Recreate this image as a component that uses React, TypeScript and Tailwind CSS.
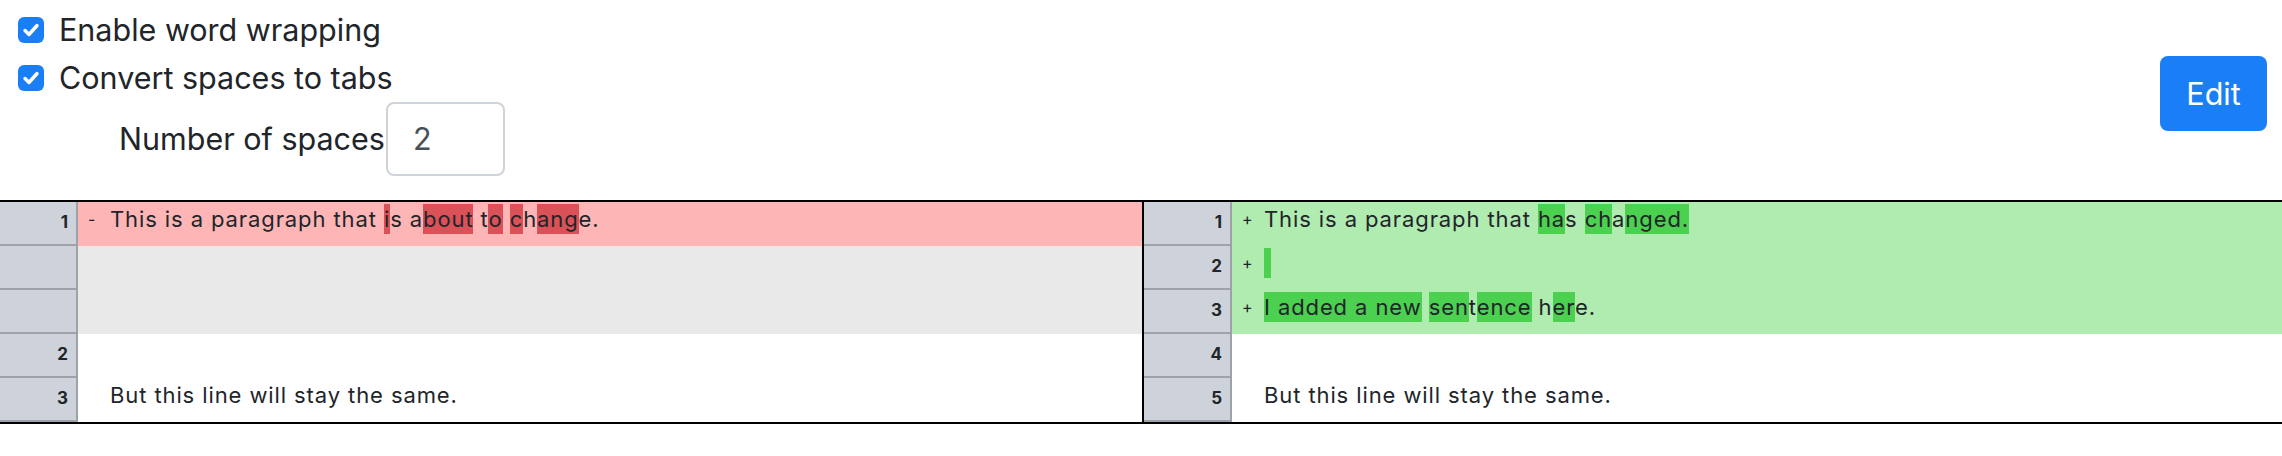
import React from 'react';

type Seg = [string, boolean];

interface Row {
    num?: number;
    kind: 'removed' | 'added' | 'empty' | 'same';
    segs: Seg[];
}

const LEFT_ROWS: Row[] = [
    {
        num: 1,
        kind: 'removed',
        segs: [
            ['This is a paragraph that ', false],
            ['i', true],
            ['s a', false],
            ['bout', true],
            [' t', false],
            ['o', true],
            [' ', false],
            ['c', true],
            ['h', false],
            ['ang', true],
            ['e.', false],
        ],
    },
    { kind: 'empty', segs: [] },
    { kind: 'empty', segs: [] },
    { num: 2, kind: 'same', segs: [] },
    { num: 3, kind: 'same', segs: [['But this line will stay the same.', false]] },
];

const RIGHT_ROWS: Row[] = [
    {
        num: 1,
        kind: 'added',
        segs: [
            ['This is a paragraph that ', false],
            ['ha', true],
            ['s ', false],
            ['ch', true],
            ['a', false],
            ['nged.', true],
        ],
    },
    { num: 2, kind: 'added', segs: [[' ', true]] },
    {
        num: 3,
        kind: 'added',
        segs: [
            ['I added a new', true],
            [' ', false],
            ['sen', true],
            ['t', false],
            ['ence', true],
            [' h', false],
            ['er', true],
            ['e.', false],
        ],
    },
    { num: 4, kind: 'same', segs: [] },
    { num: 5, kind: 'same', segs: [['But this line will stay the same.', false]] },
];

function Checkbox() {
    return (
        <span className="w-[26px] h-[26px] rounded-[6px] bg-[#1a7ff6] flex items-center justify-center shrink-0">
            <svg width="22" height="22" viewBox="0 0 22 22" fill="none">
                <path d="M5 11.5l4 4L17 6.5" stroke="white" strokeWidth="3.4" strokeLinecap="round" strokeLinejoin="round" />
            </svg>
        </span>
    );
}

function DiffPane({ rows, gutter, first }: { rows: Row[]; gutter: string; first?: boolean }) {
    return (
        <div className={`flex flex-col ${first ? 'w-[1142px]' : 'flex-1 border-l-2 border-black'}`}>
            {rows.map((row, i) => {
                const bg =
                    row.kind === 'removed'
                        ? 'bg-[#feb5b6]'
                        : row.kind === 'added'
                            ? 'bg-[#b0ebb0]'
                            : row.kind === 'empty'
                                ? 'bg-[#e9e9e9]'
                                : 'bg-white';
                const hl = row.kind === 'removed' ? 'bg-[#da5157]' : 'bg-[#4bd04f]';
                const marker = row.kind === 'removed' ? '-' : row.kind === 'added' ? '+' : '';
                return (
                    <div key={i} className="flex h-[44px]">
                        <div className={`${gutter} shrink-0 bg-[#ced2da] border-r-2 border-b-2 border-[#9da1a8] flex items-center justify-end pr-[8px] text-[17px] font-bold text-[#212529]`}>
                            {row.num}
                        </div>
                        <div className={`flex-1 ${bg} pl-[10px] pt-[2px]`}>
                            {row.kind !== 'empty' && (
                                <div className="flex leading-[30px] text-[22px] tracking-[0.9px] text-[#212529] whitespace-pre">
                                    <span className="w-[22px] text-[16px] tracking-normal shrink-0">{marker}</span>
                                    <span>
                                        {row.segs.map(([t, h], j) =>
                                            h ? (
                                                <span key={j} className={`${hl} py-[2px]`}>{t}</span>
                                            ) : (
                                                <span key={j}>{t}</span>
                                            )
                                        )}
                                    </span>
                                </div>
                            )}
                        </div>
                    </div>
                );
            })}
        </div>
    );
}

export default function App() {
    return (
        <div className="w-[2282px] h-[456px] bg-white text-[#212529] font-['Inter',sans-serif]">
            {/* Options */}
            <div className="flex items-start justify-between pr-[15px] h-[192px] pb-[8px]">
                <div className="flex flex-col pl-[18px] pt-[6px] text-[30.5px] leading-[48px]">
                    <label className="flex items-center gap-[15px]">
                        <Checkbox />
                        <span>Enable word wrapping</span>
                    </label>
                    <label className="flex items-center gap-[15px]">
                        <Checkbox />
                        <span>Convert spaces to tabs</span>
                    </label>
                    <div className="flex items-center pl-[101px]">
                        <span>Number of spaces</span>
                        <div className="ml-[1px] w-[119px] h-[74px] border-2 border-[#ced4da] rounded-[8px] flex items-center pl-[25px] text-[#495057]">
                            2
                        </div>
                    </div>
                </div>
                <button className="mt-[56px] w-[107px] h-[75px] rounded-[8px] bg-[#1a7ff6] text-white text-[30.5px] flex items-center justify-center">
                    Edit
                </button>
            </div>

            {/* Diff table */}
            <div className="flex border-y-2 border-black mt-[8px]">
                <DiffPane rows={LEFT_ROWS} gutter="w-[78px]" first />
                <DiffPane rows={RIGHT_ROWS} gutter="w-[88px]" />
            </div>
        </div>
    );
}
